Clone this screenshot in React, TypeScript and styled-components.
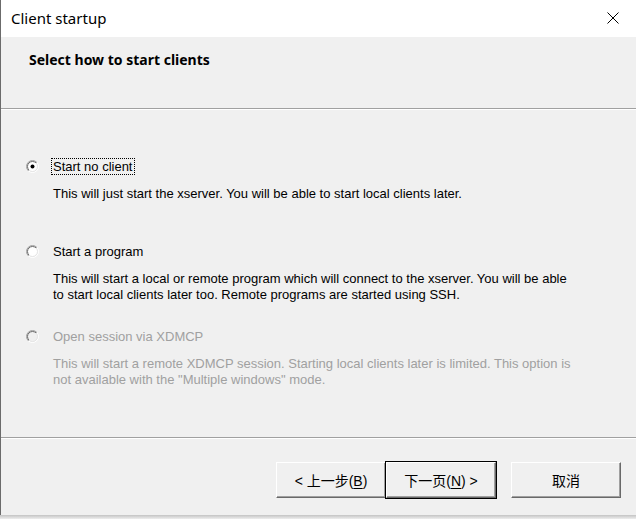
import styled, { createGlobalStyle } from 'styled-components';

const GlobalStyle = createGlobalStyle`
  html, body {
    margin: 0;
    padding: 0;
    background: #ffffff;
  }
  * {
    box-sizing: border-box;
  }
`;

type Option = {
  label: string;
  description: string;
  checked?: boolean;
  disabled?: boolean;
  focused?: boolean;
};

const options: Option[] = [
  {
    label: 'Start no client',
    description: 'This will just start the xserver. You will be able to start local clients later.',
    checked: true,
    focused: true,
  },
  {
    label: 'Start a program',
    description:
      'This will start a local or remote program which will connect to the xserver. You will be able to start local clients later too. Remote programs are started using SSH.',
  },
  {
    label: 'Open session via XDMCP',
    description:
      'This will start a remote XDMCP session. Starting local clients later is limited. This option is not available with the "Multiple windows" mode.',
    disabled: true,
  },
];

function Radio({ checked, disabled }: { checked?: boolean; disabled?: boolean }) {
  return (
    <RadioIcon width="13" height="13" viewBox="0 0 13 13">
      <defs>
        <linearGradient id="radio-outer" x1="0" y1="0" x2="1" y2="1">
          <stop offset="0.5" stopColor="#a0a0a0" />
          <stop offset="0.5" stopColor="#ffffff" />
        </linearGradient>
        <linearGradient id="radio-inner" x1="0" y1="0" x2="1" y2="1">
          <stop offset="0.5" stopColor="#696969" />
          <stop offset="0.5" stopColor="#e3e3e3" />
        </linearGradient>
      </defs>
      <circle cx="6.5" cy="6.5" r="6" fill="none" stroke="url(#radio-outer)" strokeWidth="1" />
      <circle cx="6.5" cy="6.5" r="5" fill={disabled ? '#f0f0f0' : '#ffffff'} stroke="url(#radio-inner)" strokeWidth="1" />
      {checked && <circle cx="6.5" cy="6.5" r="2" fill="#000000" />}
    </RadioIcon>
  );
}

export default function App() {
  return (
    <>
      <GlobalStyle />
      <Window>
        <TitleBar>
          <TitleText>Client startup</TitleText>
          <CloseButton>
            <svg width="12" height="12" viewBox="0 0 12 12">
              <path d="M0.5 0.5 L11.5 11.5 M11.5 0.5 L0.5 11.5" stroke="#000" strokeWidth="1" fill="none" />
            </svg>
          </CloseButton>
        </TitleBar>
        <Header>
          <HeaderTitle>Select how to start clients</HeaderTitle>
        </Header>
        <Separator />
        <Body>
          {options.map(opt => (
            <OptionBlock key={opt.label}>
              <OptionRow>
                <Radio checked={opt.checked} disabled={opt.disabled} />
                <OptionLabel $disabled={opt.disabled} $focused={opt.focused}>
                  {opt.label}
                </OptionLabel>
              </OptionRow>
              <Description $disabled={opt.disabled}>{opt.description}</Description>
            </OptionBlock>
          ))}
        </Body>
        <Separator />
        <Footer>
          <ButtonGroup>
            <DialogButton>
              &lt; 上一步(<u>B</u>)
            </DialogButton>
            <DialogButton $default>
              下一页(<u>N</u>) &gt;
            </DialogButton>
          </ButtonGroup>
          <DialogButton>取消</DialogButton>
        </Footer>
        <Shadow />
      </Window>
    </>
  );
}

const Window = styled.div`
  width: 636px;
  height: 519px;
  display: flex;
  flex-direction: column;
  background: #f0f0f0;
  border-left: 1px solid #6b6b6b;
  position: relative;
`;

const TitleBar = styled.div`
  height: 37px;
  flex: none;
  background: #ffffff;
  display: flex;
  align-items: center;
  justify-content: space-between;
  padding: 0 17px 1px 10px;
`;

const TitleText = styled.span`
  font-family: 'Noto Sans', 'Open Sans', sans-serif;
  font-size: 15px;
  color: #000000;
`;

const CloseButton = styled.span`
  display: flex;
  width: 12px;
  height: 12px;
`;

const Header = styled.div`
  height: 71px;
  flex: none;
  padding: 13px 0 0 28px;
`;

const HeaderTitle = styled.div`
  font-family: 'Noto Sans', 'Open Sans', sans-serif;
  font-weight: 700;
  font-size: 14px;
  line-height: 20px;
  color: #000000;
`;

const Separator = styled.div`
  height: 2px;
  flex: none;
  border-top: 1px solid #a0a0a0;
  border-bottom: 1px solid #ffffff;
`;

const Body = styled.div`
  flex: 1;
  padding: 48px 0 0 25px;
  display: flex;
  flex-direction: column;
`;

const OptionBlock = styled.div`
  height: 85px;
  flex: none;
  display: flex;
  flex-direction: column;
`;

const OptionRow = styled.div`
  display: flex;
  align-items: center;
  gap: 12px;
`;

const RadioIcon = styled.svg`
  flex: none;
  display: block;
`;

const OptionLabel = styled.span<{ $disabled?: boolean; $focused?: boolean }>`
  font-family: 'Liberation Sans', Arial, sans-serif;
  font-size: 13px;
  line-height: 15px;
  padding: 0 1px;
  border: 1px dotted ${p => (p.$focused ? '#000000' : 'transparent')};
  color: ${p => (p.$disabled ? '#a0a0a0' : '#000000')};
`;

const Description = styled.p<{ $disabled?: boolean }>`
  margin: 11px 0 0 27px;
  width: 524px;
  font-family: 'Liberation Sans', Arial, sans-serif;
  font-size: 13px;
  line-height: 16px;
  color: ${p => (p.$disabled ? '#a0a0a0' : '#000000')};
`;

const Footer = styled.div`
  height: 76px;
  flex: none;
  display: flex;
  justify-content: flex-end;
  align-items: flex-start;
  gap: 15px;
  padding: 23px 15px 0 0;
`;

const ButtonGroup = styled.div`
  display: flex;
`;

const DialogButton = styled.button<{ $default?: boolean }>`
  width: 110px;
  height: 36px;
  padding: 0;
  margin: 0;
  background: #f0f0f0;
  font-family: 'Liberation Sans', 'Noto Sans CJK SC', sans-serif;
  font-size: 14px;
  color: #000000;
  border: 1px solid;
  border-color: #ffffff #696969 #696969 #ffffff;
  box-shadow: ${p =>
    p.$default
      ? 'inset -1px -1px 0 #a0a0a0, 0 0 0 1px #000000'
      : 'inset -1px -1px 0 #a0a0a0'};
  position: relative;
  z-index: ${p => (p.$default ? 1 : 0)};

  u {
    text-decoration: underline;
    text-underline-offset: 2px;
  }
`;

const Shadow = styled.div`
  height: 4px;
  flex: none;
  margin-left: -1px;
  background: linear-gradient(#c4c4c4, #eeeeee);
`;
